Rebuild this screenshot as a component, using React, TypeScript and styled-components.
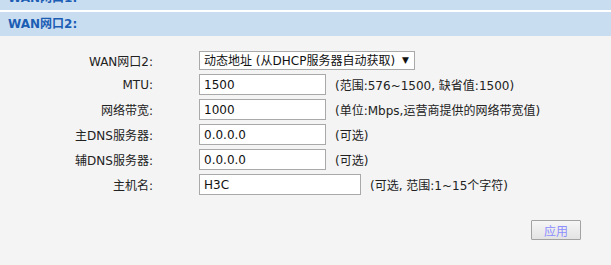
import React from "react";
import styled, { createGlobalStyle } from "styled-components";

const Global = createGlobalStyle`
  html, body { margin: 0; padding: 0; background: #f4f4f4; }
  body {
    font-family: "DejaVu Sans", "Noto Sans CJK SC", sans-serif;
    font-size: 12px;
    color: #222;
  }
`;

const Page = styled.div`
  width: 611px;
  height: 265px;
  overflow: hidden;
  background: #f4f4f4;
  display: flex;
  flex-direction: column;
`;

const Clip = styled.div`
  height: 10px;
  overflow: hidden;
  border-bottom: 2px solid #ffffff;
`;

const SectionHeader = styled.div<{ $shift?: number }>`
  height: 24px;
  line-height: 24px;
  margin-top: ${(p) => (p.$shift ? `-${p.$shift}px` : "0")};
  padding-left: 8px;
  background: #c9ddf1;
  color: #1c5db4;
  font-weight: bold;
  font-size: 12px;
`;

const Form = styled.div`
  display: grid;
  grid-template-columns: 153px auto;
  column-gap: 46px;
  row-gap: 4px;
  padding-top: 15px;
  align-items: center;
`;

const Label = styled.div`
  text-align: right;
  white-space: nowrap;
  color: #222;
`;

const Field = styled.div`
  display: flex;
  align-items: center;
  gap: 9px;
`;

const SelectWrap = styled.div`
  position: relative;
  width: 216px;
  height: 19px;
`;

const Select = styled.select`
  appearance: none;
  -webkit-appearance: none;
  box-sizing: border-box;
  width: 216px;
  height: 19px;
  margin: 0;
  padding: 0 0 0 4px;
  border: 1px solid #a9a9a9;
  border-radius: 0;
  background: #ffffff;
  font-family: "DejaVu Sans", "Noto Sans CJK SC", sans-serif;
  font-size: 12px;
  color: #111;
  outline: none;
`;

const Arrow = styled.span`
  position: absolute;
  right: 6px;
  top: 3px;
  font-size: 9px;
  line-height: 12px;
  color: #111;
  pointer-events: none;
`;

const Input = styled.input<{ $w: number }>`
  box-sizing: border-box;
  width: ${(p) => p.$w}px;
  height: 21px;
  margin: 0;
  padding: 0 4px;
  border: 1px solid #a9a9a9;
  background: #ffffff;
  font-family: "DejaVu Sans", "Noto Sans CJK SC", sans-serif;
  font-size: 12px;
  color: #111;
  outline: none;
`;

const Hint = styled.span`
  white-space: nowrap;
  color: #222;
`;

const Footer = styled.div`
  display: flex;
  justify-content: flex-end;
  padding: 25px 30px 0 0;
`;

const ApplyButton = styled.button`
  box-sizing: border-box;
  width: 50px;
  height: 20px;
  padding: 0;
  border: 1px solid #a2a2a2;
  border-radius: 1px;
  background: linear-gradient(#f6f6f6, #e3e3e3);
  color: #8d8dff;
  font-family: "DejaVu Sans", "Noto Sans CJK SC", sans-serif;
  font-size: 12px;
`;

const rows: { label: string; value: string; width: number; hint: string }[] = [
  { label: "MTU:", value: "1500", width: 127, hint: "(范围:576~1500, 缺省值:1500)" },
  { label: "网络带宽:", value: "1000", width: 127, hint: "(单位:Mbps,运营商提供的网络带宽值)" },
  { label: "主DNS服务器:", value: "0.0.0.0", width: 127, hint: "(可选)" },
  { label: "辅DNS服务器:", value: "0.0.0.0", width: 127, hint: "(可选)" },
  { label: "主机名:", value: "H3C", width: 162, hint: "(可选, 范围:1~15个字符)" },
];

export default function App() {
  return (
    <Page>
      <Global />
      <Clip>
        <SectionHeader $shift={14}>WAN网口1:</SectionHeader>
      </Clip>
      <SectionHeader>WAN网口2:</SectionHeader>
      <Form>
        <Label>WAN网口2:</Label>
        <Field>
          <SelectWrap>
            <Select defaultValue="dhcp">
              <option value="dhcp">动态地址 (从DHCP服务器自动获取)</option>
            </Select>
            <Arrow>▼</Arrow>
          </SelectWrap>
        </Field>
        {rows.map((r) => (
          <React.Fragment key={r.label}>
            <Label>{r.label}</Label>
            <Field>
              <Input $w={r.width} defaultValue={r.value} />
              <Hint>{r.hint}</Hint>
            </Field>
          </React.Fragment>
        ))}
      </Form>
      <Footer>
        <ApplyButton disabled>应用</ApplyButton>
      </Footer>
    </Page>
  );
}
